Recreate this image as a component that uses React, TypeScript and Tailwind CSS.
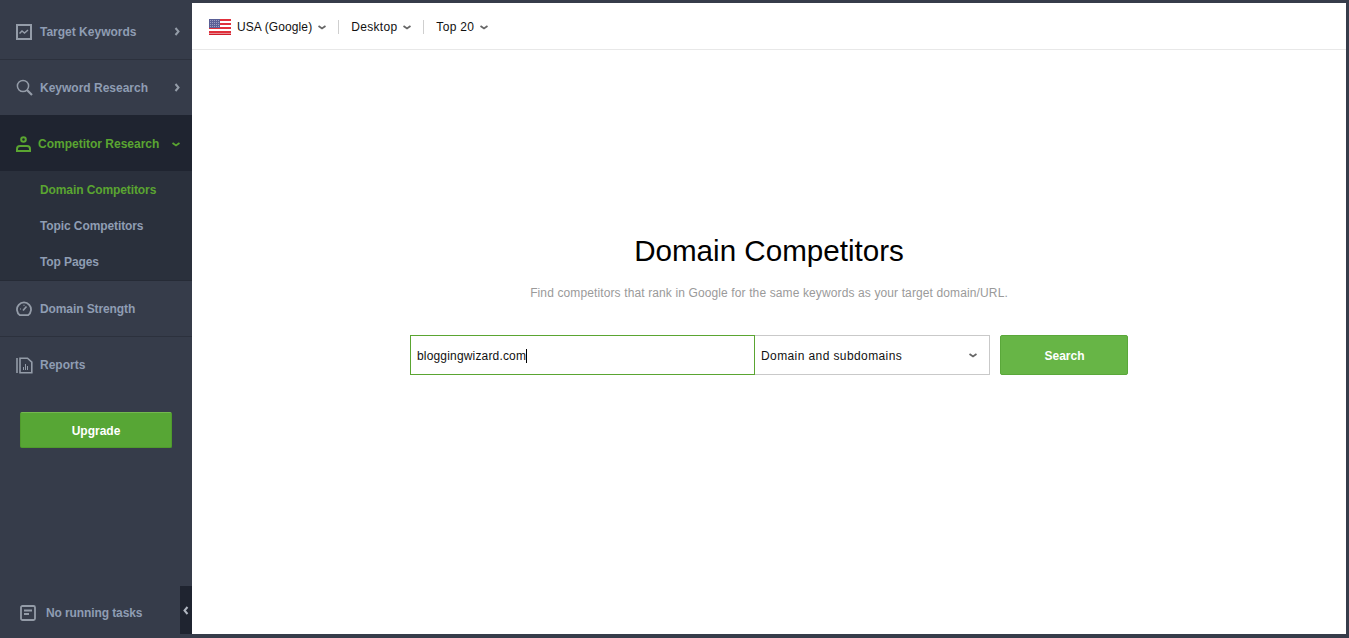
function ChevRight({ className }: { className?: string }) {
  return (
    <svg width="6" height="9" viewBox="0 0 6 9" fill="none" stroke="currentColor" strokeWidth="2" className={className}>
      <path d="M1.5 1 4.5 4.5 1.5 8" />
    </svg>
  );
}

function ChevLeft({ className }: { className?: string }) {
  return (
    <svg width="6" height="9" viewBox="0 0 6 9" fill="none" stroke="currentColor" strokeWidth="2" className={className}>
      <path d="M4.5 1 1.5 4.5 4.5 8" />
    </svg>
  );
}

function ChevDown({ className }: { className?: string }) {
  return (
    <svg width="8" height="5" viewBox="0 0 8 5" fill="none" stroke="currentColor" strokeWidth="1.8" className={className}>
      <path d="M0.5 1 4 3.4 7.5 1" />
    </svg>
  );
}

function TrendIcon() {
  return (
    <svg width="16" height="16" viewBox="0 0 16 16" fill="none" stroke="currentColor" className="shrink-0">
      <rect x="1" y="1" width="14" height="14" strokeWidth="2" />
      <path d="M3.5 9.5 6 7l2.5 2L12 6" strokeWidth="1.5" />
    </svg>
  );
}

function SearchIcon() {
  return (
    <svg width="17" height="17" viewBox="0 0 17 17" fill="none" stroke="currentColor" className="shrink-0">
      <circle cx="7" cy="7" r="5.6" strokeWidth="1.5" />
      <path d="M11 11l5 5" strokeWidth="2.2" />
    </svg>
  );
}

function PersonIcon() {
  return (
    <svg width="15" height="16" viewBox="0 0 15 16" fill="none" stroke="currentColor" strokeWidth="2" className="shrink-0">
      <circle cx="7.5" cy="3.5" r="2.3" />
      <path d="M1 15v-2a3 3 0 0 1 3-3h7a3 3 0 0 1 3 3v2z" />
    </svg>
  );
}

function GaugeIcon() {
  return (
    <svg width="16" height="16" viewBox="0 0 16 16" fill="none" stroke="currentColor" className="shrink-0">
      <path d="M4 14.2a7 7 0 1 1 8 0z" strokeWidth="1.8" />
      <path d="M7 9.5 10.5 5.5" strokeWidth="1.6" />
      <path d="M4 8h1M8 3.8v1" strokeWidth="1.2" />
    </svg>
  );
}

function ReportsIcon() {
  return (
    <svg width="17" height="17" viewBox="0 0 17 17" fill="none" stroke="currentColor" className="shrink-0">
      <path d="M1 1v15" strokeWidth="1.6" />
      <path d="M4 1.2h7.5l4.3 4v10.6H4z" strokeWidth="1.6" />
      <path d="M7.5 13V10M9.5 13V7M11.5 13V9" strokeWidth="1" />
    </svg>
  );
}

function TasksIcon() {
  return (
    <svg width="16" height="16" viewBox="0 0 16 16" fill="none" stroke="currentColor" className="shrink-0">
      <rect x="1" y="1" width="14" height="14" rx="1.5" strokeWidth="1.8" />
      <path d="M4 5.5h8M4 9h5" strokeWidth="1.8" />
    </svg>
  );
}

function UsFlag() {
  return (
    <svg width="22" height="16" viewBox="0 0 22 16" className="shrink-0">
      <rect width="22" height="16" fill="#fff" />
      <path d="M0 1h22M0 5h22M0 9h22M0 13h22" stroke="#e0303c" strokeWidth="2" />
      <rect y="14.5" width="22" height="1.5" fill="#d01c2a" />
      <rect width="11" height="9" fill="#5a5f96" />
      <path d="M1 1.5h9M1 3.5h9M1 5.5h9M1 7.5h9" stroke="#b9bcd8" strokeWidth="0.7" strokeDasharray="1 1" />
    </svg>
  );
}

export default function App() {
  return (
    <div className="flex h-[638px] w-[1349px] overflow-hidden bg-[#363c4a] pt-[3px] pr-[3px] pb-[4px] font-['Liberation_Sans',Arial,sans-serif]">
      <aside className="relative flex w-[192px] shrink-0 flex-col">
        <div className="flex h-[57px] items-center border-b border-[#2c313d] pt-px pr-3 pl-4 text-[#8f9db3]">
          <span className="flex w-6 text-[#949ca8]"><TrendIcon /></span>
          <span className="flex-1 text-xs font-bold">Target Keywords</span>
          <ChevRight className="text-[#949ca8]" />
        </div>
        <div className="flex h-[55px] items-center pr-3 pl-4 text-[#8f9db3]">
          <span className="flex w-6 text-[#949ca8]"><SearchIcon /></span>
          <span className="flex-1 text-xs font-bold">Keyword Research</span>
          <ChevRight className="text-[#949ca8]" />
        </div>
        <div className="flex h-[56px] items-center bg-[#1f2430] pt-[2px] pr-3 pl-4 text-[#5aa531]">
          <span className="flex w-[22px]"><PersonIcon /></span>
          <span className="flex-1 text-xs font-bold">Competitor Research</span>
          <ChevDown />
        </div>
        <div className="flex h-[110px] flex-col justify-center border-b border-[#262b36] bg-[#2a303c] pl-10 text-xs font-bold tracking-[-0.1px] text-[#8f9db3]">
          <div className="flex h-9 items-center text-[#5aa531]">Domain Competitors</div>
          <div className="flex h-9 items-center">Topic Competitors</div>
          <div className="flex h-9 items-center">Top Pages</div>
        </div>
        <div className="flex h-[56px] items-center border-b border-[#2c313d] pl-4 text-[#8f9db3]">
          <span className="flex w-6 text-[#949ca8]"><GaugeIcon /></span>
          <span className="text-xs font-bold tracking-[-0.1px]">Domain Strength</span>
        </div>
        <div className="flex h-[56px] items-center pl-4 text-[#8f9db3]">
          <span className="flex w-6 text-[#949ca8]"><ReportsIcon /></span>
          <span className="text-xs font-bold">Reports</span>
        </div>
        <div className="px-5 pt-[19px]">
          <button className="h-9 w-[152px] rounded-[2px] border border-[#4f9a2c] border-t-[#74b84f] bg-[#57a635] pt-px text-xs font-bold text-white">
            Upgrade
          </button>
        </div>
        <div className="mt-auto flex h-[48px] items-center pt-[6px] pl-5 text-[#8f9db3]">
          <span className="flex w-[26px] text-[#949ca8]"><TasksIcon /></span>
          <span className="text-xs font-bold tracking-[-0.1px]">No running tasks</span>
        </div>
        <div className="absolute right-0 bottom-0 flex h-[48px] w-3 items-center justify-center bg-[#1f2430] text-[#b0b6c0]">
          <ChevLeft />
        </div>
      </aside>

      <main className="flex flex-1 flex-col bg-white">
        <header className="flex h-[47px] shrink-0 items-center border-b border-[#e8e8e8] pt-[2px] pl-[17px] text-xs text-[#111]">
          <UsFlag />
          <span className="ml-1.5 tracking-[0.1px]">USA (Google)</span>
          <ChevDown className="ml-[6px] text-[#666]" />
          <span className="mx-3 h-3.5 w-px bg-[#cfcfcf]" />
          <span className="tracking-[0.3px]">Desktop</span>
          <ChevDown className="ml-[6px] text-[#666]" />
          <span className="mx-3 h-3.5 w-px bg-[#cfcfcf]" />
          <span className="tracking-[0.3px]">Top 20</span>
          <ChevDown className="ml-[6px] text-[#666]" />
        </header>

        <div className="flex flex-col items-center pt-[184px]">
          <h1 className="text-[29.6px] leading-[34px] text-black">Domain Competitors</h1>
          <p className="mt-[17px] text-xs leading-4 tracking-[0.12px] text-[#9a9a9a]">
            Find competitors that rank in Google for the same keywords as your target domain/URL.
          </p>
          <div className="mt-[34px] flex h-10 text-xs">
            <div className="flex w-[345px] items-center border border-[#5aa531] pt-px pl-[6px] tracking-[0.17px] text-[#111]">
              bloggingwizard.com
              <span className="h-3.5 w-px bg-black" />
            </div>
            <div className="flex w-[235px] items-center justify-between border border-l-0 border-[#c9c9c9] pt-px pr-3 pl-[6px] tracking-[0.4px] text-[#111]">
              Domain and subdomains
              <ChevDown className="text-[#666]" />
            </div>
            <button className="ml-2.5 w-[128px] rounded-[2px] border border-[#5aa83a] bg-[#67b546] pt-px pl-px font-bold text-white">
              Search
            </button>
          </div>
        </div>
      </main>
    </div>
  );
}
